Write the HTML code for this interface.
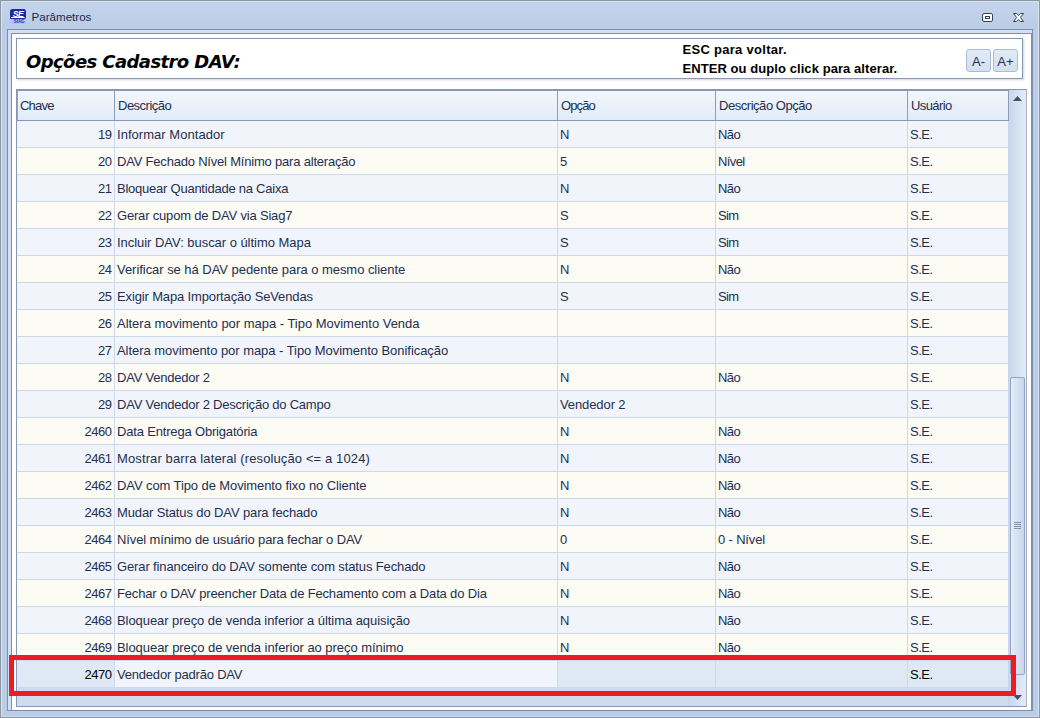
<!DOCTYPE html>
<html lang="pt-BR"><head><meta charset="utf-8"><title>Parâmetros</title>
<style>
*{box-sizing:border-box;margin:0;padding:0}
html,body{width:1040px;height:718px;overflow:hidden}
body{position:relative;background:#c3d4ea;font-family:"Liberation Sans",sans-serif;font-size:13px;color:#1f2f4f}
.win{position:absolute;left:0;top:0;width:1040px;height:718px;background:linear-gradient(#c4d4eb 0,#bbcde6 28px,#bccee7 100%)}
.win:before{content:"";position:absolute;left:0;top:0;right:0;bottom:0;border:1px solid #8e97a3}
.win:after{content:"";position:absolute;left:1px;top:1px;right:1px;bottom:1px;border:1px solid #d9e4f3;border-bottom-color:#c9d7ea}
.ticon{position:absolute;left:10px;top:9px;width:16px;height:15px}
.title{position:absolute;left:31.5px;top:8.6px;font-size:11.6px;line-height:16px;color:#172a52;white-space:nowrap}
.btn-max{position:absolute;left:982px;top:13px;width:11px;height:9px}
.btn-close{position:absolute;left:1012px;top:12px;width:13px;height:11px}
.frame{position:absolute;left:7px;top:29px;width:1026px;height:682px;border:1px solid #7b8fad;background:#d3e0f3}
.inner{position:absolute;left:3px;top:3px;width:1021px;height:678px;border:1px solid #7b8fad;background:#fff}
/* coordinates inside .inner are page coords minus (12,34) */
.panel{position:absolute;left:4px;top:4px;width:1007px;height:41px;border:1px solid #8798b3;background:#fff;box-shadow:1px 1px 2px rgba(120,130,150,.35)}
.h1{position:absolute;left:9px;top:12px;font-family:"DejaVu Sans","Liberation Sans",sans-serif;font-weight:bold;font-style:italic;font-size:18px;line-height:22px;color:#000;white-space:nowrap;letter-spacing:-.58px}
.info{position:absolute;left:665.5px;top:1px;font-weight:bold;font-size:13px;line-height:19px;color:#000;white-space:nowrap}
.ab{position:absolute;top:10px;width:25px;height:23px;border:1px solid #aebcd3;border-radius:3px;background:linear-gradient(#e1eaf6,#d3e0f1);font-size:13px;line-height:23px;text-align:center;color:#1f2f4f}
.grid{position:absolute;left:4px;top:55px;width:1011px;height:618px;border:1px solid #8798b3;border-right-color:#a9b1bf;background:#cfdcec;overflow:hidden}
/* inside grid: page coords minus (17,90) */
.hdr{z-index:2;position:absolute;left:0;top:0;width:992px;height:31px;background:linear-gradient(#f3f7fc 0,#eaf1fa 50%,#e2ebf7 100%);border-bottom:1px solid #8698b3;border-top:1px solid #8798b3}
.hc{position:absolute;top:0;height:29px;line-height:29px;padding-left:3px;border-right:1px solid #8b9db9;white-space:nowrap}
.row{position:absolute;left:0;width:992px;height:27px;border-bottom:1px solid #ccd9ec}
.row.odd{background:#f1f5fb}
.row.even{background:#fcfbf4}
.c{position:absolute;top:0;height:26px;line-height:28px;padding-left:2px;border-right:1px solid #ccd9ec;white-space:nowrap;overflow:hidden}
.c1{left:0;width:98px}
.c2{left:98px;width:443px}
.c3{left:541px;width:158px}
.c4{left:699px;width:192px}
.c5{left:891px;width:101px}
.c.c1{text-align:right;padding-right:2.6px;letter-spacing:-.5px}
.c.c3{letter-spacing:-.1px}
.c.c4{letter-spacing:-.6px}
.c.c5{letter-spacing:-.5px}
.hc.c1{letter-spacing:-.8px;border-left:1px solid #93a5c0;padding-left:2px}
.hc.c2{letter-spacing:-.5px}
.hc.c3{letter-spacing:-.9px}
.hc.c4{letter-spacing:-.46px}
.hc.c5{letter-spacing:-.6px}
.c.c5{border-right:none}
.row.sel .c1,.row.sel .c3,.row.sel .c4,.row.sel .c5{background:#dfe9f5;color:#000}
.sb{position:absolute;left:991px;top:0;width:18px;height:616px;background:linear-gradient(90deg,#c5d5eb 0,#d6e2f2 50%,#e3ecf7 100%)}
.thumb{position:absolute;left:2px;top:287px;width:15px;height:298px;border:1px solid #93a6c6;border-radius:2px;background:linear-gradient(90deg,#e4edf9 0,#d5e1f2 50%,#c6d6ec 100%)}
.grip{position:absolute;left:3px;width:7px;height:1px;background:#8293ad}
.arr{position:absolute;left:5px;width:9px;height:5px;display:block}
.arr.up{top:6px}
.arr.dn{top:605px}
.redbox{position:absolute;left:-3px;top:621px;width:1007px;height:41px;border:5px solid #ec1c24}

</style></head>
<body>
<div class="win">
<svg class="ticon" viewBox="0 0 16 15"><rect x="0" y="9" width="16" height="6" fill="#b3c2f3"/><rect x="0" y="0" width="16" height="10" rx="2.6" fill="#1c2a9e"/><rect x="0" y="5" width="5" height="5" fill="#1c2a9e"/><text x="7.9" y="7.5" font-family="Liberation Sans, sans-serif" font-size="8.8" font-weight="bold" font-style="italic" fill="#fff" text-anchor="middle" letter-spacing="-0.6">SE</text><rect x="1" y="8" width="13.5" height="1" fill="#fff"/><text x="9.2" y="13.8" font-family="Liberation Sans, sans-serif" font-size="4.6" font-weight="bold" fill="#2335c8" text-anchor="middle" letter-spacing="-0.1">SIAG</text></svg>
<div class="title">Parâmetros</div>
<svg class="btn-max" viewBox="0 0 11 9"><rect x="0.5" y="0.5" width="10" height="8" rx="1.5" fill="#fff" stroke="#34425e"/><rect x="3.5" y="3.5" width="4" height="2" fill="#fff" stroke="#34425e"/></svg>
<svg class="btn-close" viewBox="0 0 13 11"><path d="M1.5 1.5 L4.6 1.5 L6.5 3.5 L8.4 1.5 L11.5 1.5 L8.4 5.5 L11.5 9.5 L8.4 9.5 L6.5 7.5 L4.6 9.5 L1.5 9.5 L4.6 5.5 Z" fill="#fff" stroke="#34425e" stroke-width="1" stroke-linejoin="round"/></svg>
<div class="frame"><div class="inner">
<div class="panel"><div class="h1">Opções Cadastro DAV:</div><div class="info"><span style="letter-spacing:.29px">ESC para voltar.</span><br><span style="letter-spacing:.07px">ENTER ou duplo click para alterar.</span></div><div class="ab" style="left:949px">A-</div><div class="ab" style="left:976px">A+</div></div>
<div class="grid">
<div class="hdr"><div class="hc c1">Chave</div><div class="hc c2">Descrição</div><div class="hc c3">Opção</div><div class="hc c4">Descrição Opção</div><div class="hc c5">Usuário</div></div>
<div class="row odd" style="top:31px"><div class="c c1">19</div><div class="c c2" style="letter-spacing:0.038px">Informar Montador</div><div class="c c3">N</div><div class="c c4">Não</div><div class="c c5">S.E.</div></div>
<div class="row even" style="top:58px"><div class="c c1">20</div><div class="c c2" style="letter-spacing:-0.200px">DAV Fechado Nível Mínimo para alteração</div><div class="c c3">5</div><div class="c c4">Nível</div><div class="c c5">S.E.</div></div>
<div class="row odd" style="top:85px"><div class="c c1">21</div><div class="c c2" style="letter-spacing:-0.237px">Bloquear Quantidade na Caixa</div><div class="c c3">N</div><div class="c c4">Não</div><div class="c c5">S.E.</div></div>
<div class="row even" style="top:112px"><div class="c c1">22</div><div class="c c2" style="letter-spacing:-0.185px">Gerar cupom de DAV via Siag7</div><div class="c c3">S</div><div class="c c4">Sim</div><div class="c c5">S.E.</div></div>
<div class="row odd" style="top:139px"><div class="c c1">23</div><div class="c c2" style="letter-spacing:-0.038px">Incluir DAV: buscar o último Mapa</div><div class="c c3">S</div><div class="c c4">Sim</div><div class="c c5">S.E.</div></div>
<div class="row even" style="top:166px"><div class="c c1">24</div><div class="c c2" style="letter-spacing:-0.043px">Verificar se há DAV pedente para o mesmo cliente</div><div class="c c3">N</div><div class="c c4">Não</div><div class="c c5">S.E.</div></div>
<div class="row odd" style="top:193px"><div class="c c1">25</div><div class="c c2" style="letter-spacing:-0.140px">Exigir Mapa Importação SeVendas</div><div class="c c3">S</div><div class="c c4">Sim</div><div class="c c5">S.E.</div></div>
<div class="row even" style="top:220px"><div class="c c1">26</div><div class="c c2" style="letter-spacing:-0.021px">Altera movimento por mapa - Tipo Movimento Venda</div><div class="c c3"></div><div class="c c4"></div><div class="c c5">S.E.</div></div>
<div class="row odd" style="top:247px"><div class="c c1">27</div><div class="c c2" style="letter-spacing:-0.049px">Altera movimento por mapa - Tipo Movimento Bonificação</div><div class="c c3"></div><div class="c c4"></div><div class="c c5">S.E.</div></div>
<div class="row even" style="top:274px"><div class="c c1">28</div><div class="c c2" style="letter-spacing:-0.231px">DAV Vendedor 2</div><div class="c c3">N</div><div class="c c4">Não</div><div class="c c5">S.E.</div></div>
<div class="row odd" style="top:301px"><div class="c c1">29</div><div class="c c2" style="letter-spacing:-0.225px">DAV Vendedor 2 Descrição do Campo</div><div class="c c3">Vendedor 2</div><div class="c c4"></div><div class="c c5">S.E.</div></div>
<div class="row even" style="top:328px"><div class="c c1">2460</div><div class="c c2" style="letter-spacing:-0.174px">Data Entrega Obrigatória</div><div class="c c3">N</div><div class="c c4">Não</div><div class="c c5">S.E.</div></div>
<div class="row odd" style="top:355px"><div class="c c1">2461</div><div class="c c2" style="letter-spacing:0.119px">Mostrar barra lateral (resolução &lt;= a 1024)</div><div class="c c3">N</div><div class="c c4">Não</div><div class="c c5">S.E.</div></div>
<div class="row even" style="top:382px"><div class="c c1">2462</div><div class="c c2" style="letter-spacing:-0.095px">DAV com Tipo de Movimento fixo no Cliente</div><div class="c c3">N</div><div class="c c4">Não</div><div class="c c5">S.E.</div></div>
<div class="row odd" style="top:409px"><div class="c c1">2463</div><div class="c c2" style="letter-spacing:-0.123px">Mudar Status do DAV para fechado</div><div class="c c3">N</div><div class="c c4">Não</div><div class="c c5">S.E.</div></div>
<div class="row even" style="top:436px"><div class="c c1">2464</div><div class="c c2" style="letter-spacing:-0.115px">Nível mínimo de usuário para fechar o DAV</div><div class="c c3">0</div><div class="c c4" style="letter-spacing:-.16px">0 - Nível</div><div class="c c5">S.E.</div></div>
<div class="row odd" style="top:463px"><div class="c c1">2465</div><div class="c c2" style="letter-spacing:-0.127px">Gerar financeiro do DAV somente com status Fechado</div><div class="c c3">N</div><div class="c c4">Não</div><div class="c c5">S.E.</div></div>
<div class="row even" style="top:490px"><div class="c c1">2467</div><div class="c c2" style="letter-spacing:-0.159px">Fechar o DAV preencher Data de Fechamento com a Data do Dia</div><div class="c c3">N</div><div class="c c4">Não</div><div class="c c5">S.E.</div></div>
<div class="row odd" style="top:517px"><div class="c c1">2468</div><div class="c c2" style="letter-spacing:-0.064px">Bloquear preço de venda inferior a última aquisição</div><div class="c c3">N</div><div class="c c4">Não</div><div class="c c5">S.E.</div></div>
<div class="row even" style="top:544px"><div class="c c1">2469</div><div class="c c2" style="letter-spacing:-0.055px">Bloquear preço de venda inferior ao preço mínimo</div><div class="c c3">N</div><div class="c c4">Não</div><div class="c c5">S.E.</div></div>
<div class="row odd sel" style="top:571px"><div class="c c1">2470</div><div class="c c2" style="letter-spacing:-0.200px">Vendedor padrão DAV</div><div class="c c3"></div><div class="c c4"></div><div class="c c5">S.E.</div></div>
<div class="sb"><svg class="arr up" viewBox="0 0 9 5"><polygon points="4.5,0 9,5 0,5" fill="#464f68"/></svg><div class="thumb"><div class="grip" style="top:144px"></div><div class="grip" style="top:146px"></div><div class="grip" style="top:148px"></div><div class="grip" style="top:150px"></div></div><svg class="arr dn" viewBox="0 0 9 5"><polygon points="0,0 9,0 4.5,5" fill="#464f68"/></svg></div>
</div>
<div class="redbox"></div>
</div>
</body></html>
